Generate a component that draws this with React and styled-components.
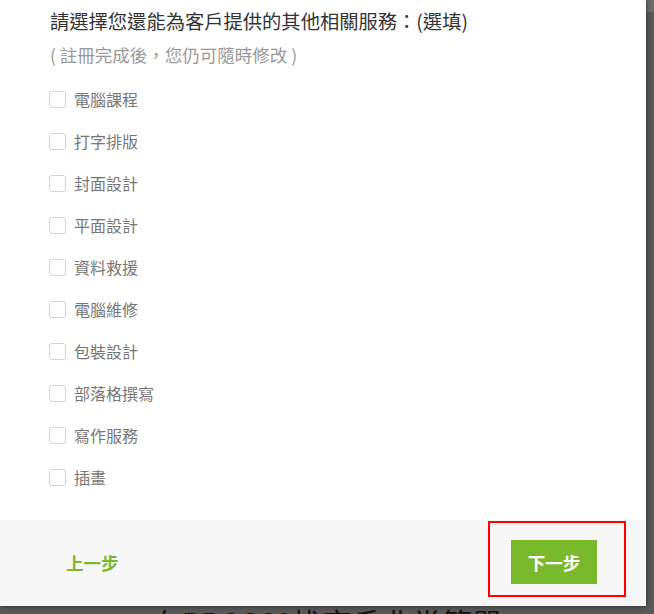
import React, { useState } from "react";
import styled, { createGlobalStyle } from "styled-components";

const GlobalStyle = createGlobalStyle`
  html, body {
    margin: 0;
    padding: 0;
    background: #5c5c5c;
    overflow: hidden;
  }
  body {
    font-family: "Noto Sans CJK TC", "Noto Sans", "Liberation Sans", sans-serif;
  }
`;

const services = [
  "電腦課程",
  "打字排版",
  "封面設計",
  "平面設計",
  "資料救援",
  "電腦維修",
  "包裝設計",
  "部落格撰寫",
  "寫作服務",
  "插畫",
];

// dimmed page behind the dialog
const Backdrop = styled.div`
  position: relative;
  width: 654px;
  height: 614px;
  overflow: hidden;
  background: #5a5a5a;
  display: flex;
  flex-direction: column;
`;

const BackHeader = styled.div`
  height: 12px;
  background: #6f6f6f;
  flex-shrink: 0;
`;

const BackTitle = styled.h2`
  margin: 590px 0 0;
  text-align: center;
  font-size: 30px;
  font-weight: 400;
  line-height: 40px;
  color: #111;
`;

const Modal = styled.div`
  position: absolute;
  top: 0;
  left: 0;
  width: 646px;
  height: 606px;
  background: #fff;
  box-shadow: 0 0 6px rgba(0, 0, 0, 0.55);
  display: flex;
  flex-direction: column;
`;

const Body = styled.div`
  flex: 1;
  padding: 7px 0 0 50px;
`;

const Title = styled.h3`
  margin: 0;
  font-size: 19.3px;
  font-weight: 400;
  line-height: 28px;
  color: #333;
`;

const Hint = styled.p`
  margin: 8px 0 0;
  font-size: 17.5px;
  line-height: 24px;
  color: #999;
`;

const List = styled.div`
  margin-top: 11px;
  display: flex;
  flex-direction: column;
`;

const Option = styled.label`
  display: flex;
  align-items: center;
  height: 42px;
  cursor: pointer;
`;

const Box = styled.span`
  box-sizing: border-box;
  width: 17px;
  height: 17px;
  margin-left: -1px;
  border: 1.5px solid #d4d4d4;
  border-radius: 3px;
  background: ${(p) => (p.checked ? "#7ab82c" : "#fff")};
  flex-shrink: 0;
`;

const Label = styled.span`
  margin-left: 8px;
  font-size: 16px;
  color: #777;
`;

const Footer = styled.div`
  height: 85px;
  background: #f7f7f7;
  display: flex;
  align-items: flex-start;
  justify-content: space-between;
  padding: 1px 20px 0 66px;
`;

const BackLink = styled.a`
  margin-top: 30px;
  font-size: 17.5px;
  font-weight: 700;
  line-height: 24px;
  color: #7ab82c;
  cursor: pointer;
`;

const Highlight = styled.div`
  box-sizing: border-box;
  width: 138px;
  height: 76px;
  border: 2px solid #ff0000;
  padding: 17px 0 0 21px;
`;

const NextButton = styled.button`
  width: 86px;
  height: 44px;
  border: none;
  background: #7ab82c;
  color: #fff;
  font-family: inherit;
  font-size: 17.5px;
  font-weight: 700;
  cursor: pointer;
`;

export default function App() {
  const [picked, setPicked] = useState({});

  return (
    <>
      <GlobalStyle />
      <Backdrop>
        <BackHeader />
        <BackTitle>在PRO360找客戶非常簡單</BackTitle>
        <Modal>
          <Body>
            <Title>請選擇您還能為客戶提供的其他相關服務：(選填)</Title>
            <Hint>( 註冊完成後，您仍可隨時修改 )</Hint>
            <List>
              {services.map((s) => (
                <Option
                  key={s}
                  onClick={() => setPicked((p) => ({ ...p, [s]: !p[s] }))}
                >
                  <Box checked={picked[s]} />
                  <Label>{s}</Label>
                </Option>
              ))}
            </List>
          </Body>
          <Footer>
            <BackLink>上一步</BackLink>
            <Highlight>
              <NextButton>下一步</NextButton>
            </Highlight>
          </Footer>
        </Modal>
      </Backdrop>
    </>
  );
}
